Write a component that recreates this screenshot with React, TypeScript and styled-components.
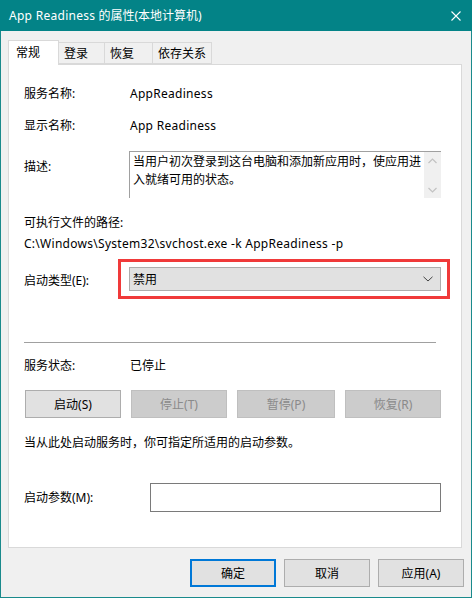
import React from "react";
import styled, {createGlobalStyle} from "styled-components";

const GlobalStyle = createGlobalStyle`
  html, body {
    margin: 0;
    padding: 0;
    background: #f0f0f0;
  }

  body {
    font-family: "Noto Sans", "Noto Sans CJK SC", sans-serif;
    font-size: 12px;
    color: #000;
  }
`

const tabs = [
    {label: "常规", width: 51},
    {label: "登录", width: 46},
    {label: "恢复", width: 48},
    {label: "依存关系", width: 59},
];

const controlButtons = [
    {label: "启动(S)", width: 96, enabled: true},
    {label: "停止(T)", width: 96, enabled: false},
    {label: "暂停(P)", width: 98, enabled: false},
    {label: "恢复(R)", width: 96, enabled: false},
];

export default function App() {
    return <>
        <GlobalStyle/>
        <StyledWindow>
            <StyledTitleBar>
                <StyledTitle><StyledLatin>App Readiness</StyledLatin> 的属性(本地计算机)</StyledTitle>
                <StyledClose width="10" height="10" viewBox="0 0 10 10">
                    <path d="M0.5 0.5 L9.5 9.5 M9.5 0.5 L0.5 9.5" stroke="#fff" strokeWidth="1.1"/>
                </StyledClose>
            </StyledTitleBar>

            <StyledBody>
                <StyledTabStrip>
                    {tabs.map((tab, i) =>
                        <StyledTab key={tab.label} $width={tab.width} $active={i === 0}>{tab.label}</StyledTab>
                    )}
                </StyledTabStrip>

                <StyledPanel>
                    <StyledRow $top={19}>
                        <StyledLabel>服务名称:</StyledLabel>
                        <StyledLatin>AppReadiness</StyledLatin>
                    </StyledRow>
                    <StyledRow $top={12}>
                        <StyledLabel>显示名称:</StyledLabel>
                        <StyledLatin>App Readiness</StyledLatin>
                    </StyledRow>
                    <StyledDescRow>
                        <StyledLabel $padTop={6}>描述:</StyledLabel>
                        <StyledTextBox>
                            <StyledTextBody>
                                当用户初次登录到这台电脑和添加新应用时，使应用进入就绪可用的状态。
                            </StyledTextBody>
                            <StyledScrollbar>
                                <StyledArrow width="9" height="6" viewBox="0 0 9 6">
                                    <path d="M0.5 5 L4.5 1 L8.5 5" fill="none" stroke="#c2c2c2" strokeWidth="1.2"/>
                                </StyledArrow>
                                <StyledArrow width="9" height="6" viewBox="0 0 9 6">
                                    <path d="M0.5 1 L4.5 5 L8.5 1" fill="none" stroke="#c2c2c2" strokeWidth="1.2"/>
                                </StyledArrow>
                            </StyledScrollbar>
                        </StyledTextBox>
                    </StyledDescRow>
                    <StyledLine $top={15}>可执行文件的路径:</StyledLine>
                    <StyledLine $top={1}>
                        <StyledLatin>C:\Windows\System32\svchost.exe -k AppReadiness -p</StyledLatin>
                    </StyledLine>

                    <StyledSelectRow>
                        <StyledLabel $padTop={4}>启动类型(E):</StyledLabel>
                        <StyledMarked>
                            <StyledSelect>
                                <span>禁用</span>
                                <svg width="10" height="6" viewBox="0 0 10 6">
                                    <path d="M0.5 0.8 L5 5 L9.5 0.8" fill="none" stroke="#444" strokeWidth="1"/>
                                </svg>
                            </StyledSelect>
                        </StyledMarked>
                    </StyledSelectRow>

                    <StyledSeparator/>

                    <StyledRow $top={13}>
                        <StyledLabel>服务状态:</StyledLabel>
                        <span>已停止</span>
                    </StyledRow>

                    <StyledButtonRow>
                        {controlButtons.map(b =>
                            <StyledButton key={b.label} $width={b.width} disabled={!b.enabled}>{b.label}</StyledButton>
                        )}
                    </StyledButtonRow>

                    <StyledLine $top={15}>当从此处启动服务时，你可指定所适用的启动参数。</StyledLine>

                    <StyledParamRow>
                        <StyledParamLabel>启动参数(M):</StyledParamLabel>
                        <StyledInput/>
                    </StyledParamRow>
                </StyledPanel>

                <StyledFooter>
                    <StyledButton $width={86} $primary>确定</StyledButton>
                    <StyledButton $width={86}>取消</StyledButton>
                    <StyledButton $width={86}>应用(A)</StyledButton>
                </StyledFooter>
            </StyledBody>
        </StyledWindow>
    </>
}

const StyledWindow = styled.div`
  box-sizing: border-box;
  width: 472px;
  height: 598px;
  display: flex;
  flex-direction: column;
  background: #f0f0f0;
  border: 1px solid #1a8a8c;
  border-top: none;
`

const StyledTitleBar = styled.div`
  height: 31px;
  margin: 0 -1px;
  padding: 0 11px 0 9px;
  display: flex;
  align-items: center;
  justify-content: space-between;
  background: #038387;
  color: #fff;
`

const StyledTitle = styled.span`
  font-size: 12px;
  line-height: 16px;
  margin-top: 1px;
`

// latin runs are set a touch wider than the default face
const StyledLatin = styled.span`
  letter-spacing: 0.28px;
  white-space: nowrap;
`

const StyledClose = styled.svg`
  display: block;
  margin-top: 1px;
`

const StyledBody = styled.div`
  flex: 1;
  padding: 9px 7px 0 7px;
  display: flex;
  flex-direction: column;
`

const StyledTabStrip = styled.div`
  display: flex;
  align-items: flex-end;
  height: 24px;
  position: relative;
  z-index: 1;
`

const StyledTab = styled.div<{ $width: number, $active?: boolean }>`
  box-sizing: border-box;
  width: ${p => p.$width}px;
  height: ${p => p.$active ? 25 : 22}px;
  margin-bottom: ${p => p.$active ? -1 : 0}px;
  padding: ${p => p.$active ? "4px 0 0 7px" : "3px 0 0 5px"};
  background: ${p => p.$active ? "#fff" : "#f0f0f0"};
  border: 1px solid #d9d9d9;
  border-bottom: ${p => p.$active ? "none" : "1px solid #d9d9d9"};
  border-left: ${p => p.$active ? "1px solid #d9d9d9" : "none"};
  line-height: 16px;
  white-space: nowrap;
`

const StyledPanel = styled.div`
  box-sizing: border-box;
  width: 454px;
  height: 484px;
  padding: 0 20px 0 15px;
  display: flex;
  flex-direction: column;
  background: #fff;
  border: 1px solid #d9d9d9;
`

const StyledRow = styled.div<{ $top: number }>`
  display: grid;
  grid-template-columns: 106px 1fr;
  align-items: center;
  height: 20px;
  margin-top: ${p => p.$top}px;
  line-height: 20px;
`

const StyledLabel = styled.span<{ $padTop?: number }>`
  padding-top: ${p => p.$padTop ?? 0}px;
  line-height: 20px;
  white-space: nowrap;
`

const StyledDescRow = styled.div`
  display: grid;
  grid-template-columns: 105px 1fr;
  align-items: start;
  margin-top: 15px;
`

const StyledTextBox = styled.div`
  height: 46px;
  display: flex;
  border-top: 1px solid #a0a0a0;
  border-left: 1px solid #a0a0a0;
`

const StyledTextBody = styled.div`
  flex: 1;
  padding: 0 2px 0 3px;
  font-family: "Noto Sans CJK SC", sans-serif;
  line-height: 17.5px;
`

const StyledScrollbar = styled.div`
  width: 17px;
  display: flex;
  flex-direction: column;
  align-items: center;
  justify-content: space-between;
  padding: 6px 0 5px;
  background: #f0f0f0;
`

const StyledArrow = styled.svg`
  display: block;
`

const StyledLine = styled.div<{ $top: number }>`
  height: 20px;
  margin-top: ${p => p.$top}px;
  line-height: 20px;
  white-space: nowrap;
`

const StyledSelectRow = styled.div`
  display: grid;
  grid-template-columns: 105px 1fr;
  align-items: center;
  margin-top: 13px;
`

// red frame drawn around the startup-type box
const StyledMarked = styled.div`
  position: relative;

  &::after {
    content: "";
    position: absolute;
    top: -8px;
    bottom: -8px;
    left: -11px;
    right: -9px;
    border: 3px solid #f03a3a;
    pointer-events: none;
  }
`

const StyledSelect = styled.div`
  box-sizing: border-box;
  height: 24px;
  padding: 0 7px 0 3px;
  display: flex;
  align-items: center;
  justify-content: space-between;
  background: #e1e1e1;
  border: 1px solid #adadad;
`

const StyledSeparator = styled.div`
  height: 1px;
  margin: 51px 5px 0 0;
  background: #a0a0a0;
`

const StyledButtonRow = styled.div`
  display: flex;
  justify-content: space-between;
  margin: 14px 0 0 1px;
`

const StyledButton = styled.button<{ $width: number, $primary?: boolean }>`
  box-sizing: border-box;
  width: ${p => p.$width}px;
  height: 28px;
  padding: 0;
  font-family: "Noto Sans", "Noto Sans CJK SC", sans-serif;
  font-size: 12px;
  color: #000;
  background: #e1e1e1;
  border: ${p => p.$primary ? "2px solid #0078d7" : "1px solid #adadad"};

  &:disabled {
    color: #8a8a8a;
    background: #cccccc;
    border-color: #bfbfbf;
  }
`

const StyledParamRow = styled.div`
  display: grid;
  grid-template-columns: 126px 1fr;
  align-items: center;
  margin-top: 30px;
`

const StyledParamLabel = styled.span`
  line-height: 20px;
  margin-top: 1px;
`

const StyledInput = styled.div`
  box-sizing: border-box;
  height: 29px;
  background: #fff;
  border: 1px solid #7a7a7a;
`

const StyledFooter = styled.div`
  display: flex;
  justify-content: flex-end;
  gap: 8px;
  margin-top: 11px;
`
